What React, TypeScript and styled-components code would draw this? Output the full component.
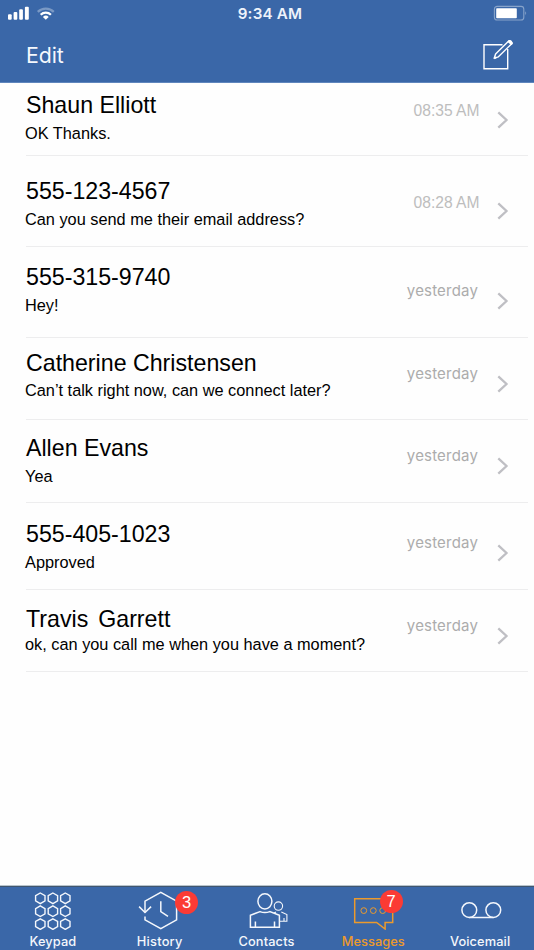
import React from "react";
import styled, { createGlobalStyle } from "styled-components";

const BLUE = "#3a67a8";
const ORANGE = "#ec9a2c";

const GlobalStyle = createGlobalStyle`
  * { box-sizing: border-box; }
  body { margin: 0; background: #fff; }
`;

const Screen = styled.div`
  display: flex;
  flex-direction: column;
  width: 534px;
  height: 950px;
  background: #fefefe;
  font-family: "Liberation Sans", Arial, sans-serif;
  overflow: hidden;
`;

const Header = styled.header`
  height: 83px;
  flex: none;
  background: ${BLUE};
  border-bottom: 1px solid #5f86bd;
  color: #fff;
  font-family: Inter, sans-serif;
`;

const StatusBar = styled.div`
  display: grid;
  grid-template-columns: 1fr auto 1fr;
  height: 28px;
  padding: 0 5px 0 11px;
`;

const StatusTime = styled.span`
  font-size: 15.2px;
  font-weight: 600;
  line-height: 28px;
  letter-spacing: 0.2px;
  color: #eef3fb;
`;

const StatusLeft = styled.div`
  margin-left: -5px;
`;

const StatusRight = styled.div`
  display: flex;
  justify-content: flex-end;
`;

const NavBar = styled.nav`
  display: flex;
  justify-content: space-between;
  height: 54px;
  padding: 0 18px 0 26px;
`;

const NavButton = styled.button`
  padding: 0;
  border: 0;
  background: none;
  color: #f5f8fd;
  font: 400 21.3px/54px Inter, sans-serif;
  letter-spacing: -0.1px;
  display: flex;
`;

const List = styled.main`
  flex: 1;
`;

const Row = styled.article<{ $height: number }>`
  display: flex;
  height: ${(p) => p.$height}px;
  margin: 0 6px 0 26px;
  border-bottom: 1px solid #ededee;
`;

const Summary = styled.div<{ $top: number }>`
  flex: 1;
  padding-top: ${(p) => p.$top}px;
`;

const Name = styled.h2<{ $wordGap?: number }>`
  margin: 0;
  color: #000;
  font-size: 23.2px;
  font-weight: 400;
  line-height: 28px;
  word-spacing: ${(p) => p.$wordGap ?? 0}px;
  white-space: nowrap;
`;

const Preview = styled.p<{ $gap: number }>`
  margin: ${(p) => p.$gap}px 0 0 -1px;
  color: #000;
  font-size: 16.32px;
  line-height: 20px;
  white-space: nowrap;
`;

const Time = styled.time<{ $top: number; $word: boolean }>`
  padding-top: ${(p) => p.$top}px;
  margin-right: ${(p) => (p.$word ? 19 : 17.5)}px;
  color: ${(p) => (p.$word ? "#acacac" : "#bdbdbd")};
  font-family: ${(p) => (p.$word ? "Inter" : '"Liberation Sans"')}, sans-serif;
  font-size: ${(p) => (p.$word ? 15 : 15.6)}px;
  line-height: 20px;
  letter-spacing: ${(p) => (p.$word ? 0.18 : 0)}px;
`;

const Disclosure = styled.div<{ $top: number }>`
  width: 31px;
  padding-top: ${(p) => p.$top}px;
  line-height: 0;
`;

const TabBar = styled.footer`
  display: grid;
  grid-template-columns: repeat(5, 1fr);
  height: 64px;
  flex: none;
  background: ${BLUE};
  border-top: 1px solid #40566f;
  box-shadow: 0 -1px 0 #b8c4cc;
`;

const Tab = styled.div<{ $active?: boolean }>`
  position: relative;
  display: flex;
  flex-direction: column;
  align-items: center;
  padding-top: 1px;
  color: ${(p) => (p.$active ? ORANGE : "#f4f7fc")};
`;

const TabLabel = styled.span<{ $spacing: number }>`
  font: 500 12.8px/16px Inter, sans-serif;
  letter-spacing: ${(p) => p.$spacing}px;
  margin: 4px 1px 0 0;
`;

const Badge = styled.span<{ $left: number; $top: number }>`
  position: absolute;
  left: ${(p) => p.$left}px;
  top: ${(p) => p.$top}px;
  width: 23px;
  height: 23px;
  border-radius: 50%;
  background: #fb3b34;
  color: #fff;
  font-size: 16.5px;
  line-height: 23px;
  text-align: center;
`;

const SignalIcon = () => (
  <svg width="52" height="28" viewBox="6 0 52 28">
    <g fill="#fff">
      <rect x="8" y="14.2" width="3.7" height="5.6" rx="1" />
      <rect x="13.6" y="12" width="3.7" height="7.8" rx="1" />
      <rect x="19.2" y="9.3" width="3.7" height="10.5" rx="1" />
      <rect x="24.9" y="6.8" width="3.9" height="13" rx="1" />
    </g>
    <g fill="none" stroke="#fff" strokeWidth="2.3">
      <path d="M37.8 11.9A11.4 11.4 0 0 1 53.8 11.9" opacity="0.33" />
      <path d="M40.7 14.7A7.3 7.3 0 0 1 50.9 14.7" />
    </g>
    <path d="M45.8 19.8L42.9 17A4.1 4.1 0 0 1 48.7 17Z" fill="#fff" />
  </svg>
);

const BatteryIcon = () => (
  <svg width="36" height="28" viewBox="493 0 36 28">
    <rect x="494.4" y="6.4" width="29.4" height="13.6" rx="2.8" fill="none" stroke="#87a3ca" strokeWidth="1.1" />
    <rect x="496.2" y="8.2" width="20.6" height="10" rx="0.8" fill="#fff" />
    <path d="M525.4 11.2Q527.2 13.2 525.4 15.3Z" fill="#9fb5d5" />
  </svg>
);

const ComposeIcon = () => (
  <svg width="34" height="54" viewBox="482 28 34 54" fill="none" stroke="#fff" strokeWidth="1.4">
    <path d="M502.5 44.7H484V68.7H507.7V49" />
    <path
      d="M494.2 58.2L495.6 54L508.2 41.6Q509.8 40.2 511.2 41.4Q512.6 42.8 511 44.4L498.4 56.8Z"
      fill={BLUE}
      strokeLinejoin="round"
    />
    <path d="M509.2 41.4L511.4 43.4" strokeWidth="2.8" strokeLinecap="round" />
    <path d="M494.2 58.2L496.2 57.4" strokeWidth="2" />
  </svg>
);

const ChevronIcon = () => (
  <svg width="13" height="18" viewBox="0 0 13 18" fill="none" stroke="#bfbfc4" strokeWidth="2.3">
    <path d="M1.3 1.3L9.5 9L1.3 16.7" />
  </svg>
);

const hexagon = (x: number, y: number) =>
  `M${x} ${y - 5.3}L${x + 4.7} ${y - 2.6}V${y + 2.6}L${x} ${y + 5.3}L${x - 4.7} ${y + 2.6}V${y - 2.6}Z`;

const KeypadIcon = () => (
  <g strokeWidth="1.4">
    {[898.3, 911.2, 924.1].map((y) =>
      [40.7, 53.3, 65.7].map((x) => <path key={`${x}-${y}`} d={hexagon(x, y)} />)
    )}
  </g>
);

const HistoryIcon = () => (
  <>
    <path d="M145.2 912.4V901.2L161 892.3L176.8 901.2V919.8L161 928.7L145.2 919.8V916.5" />
    <path d="M139.3 906.6L145.2 912.5L151.3 906.6" />
    <path d="M161 901.3V911.5L168.2 916.3" />
  </>
);

const ContactsIcon = () => (
  <>
    <ellipse cx="264.9" cy="901.3" rx="7" ry="7.6" />
    <path d="M260 911.6L250.4 915.3V927.3H279.4V915.3L269.8 911.6Q264.9 913.4 260 911.6Z" />
    <path d="M255.4 921.5V927M274.5 921.5V927" />
    <g strokeWidth="1.1">
      <circle cx="278.4" cy="906.1" r="4.2" />
      <path d="M276 912L274 913M281.3 912L286.9 914.6V921.3H280M284 918V921" />
    </g>
  </>
);

const MessagesIcon = () => (
  <>
    <path d="M354.5 898.8H392.5V922.4H384.9V929L376.4 922.4H354.5Z" />
    <g strokeWidth="1">
      <circle cx="363.6" cy="910.6" r="2.9" />
      <circle cx="373.1" cy="910.6" r="2.9" />
      <circle cx="382.5" cy="910.6" r="2.9" />
    </g>
  </>
);

const VoicemailIcon = () => (
  <>
    <circle cx="468.9" cy="910.1" r="7.4" />
    <circle cx="492.9" cy="910.1" r="7.4" />
    <path d="M468.9 917.5H492.9" />
  </>
);

const tabs = [
  { label: "Keypad", Icon: KeypadIcon, spacing: 0.1 },
  { label: "History", Icon: HistoryIcon, spacing: 0.25, badge: { count: 3, left: 68.3, top: 3.8 } },
  { label: "Contacts", Icon: ContactsIcon, spacing: 0.15 },
  { label: "Messages", Icon: MessagesIcon, spacing: 0.05, active: true, badge: { count: 7, left: 59.3, top: 2.8 } },
  { label: "Voicemail", Icon: VoicemailIcon, spacing: 0.1 },
];

const messages = [
  { name: "Shaun Elliott", text: "OK Thanks.", time: "08:35 AM", height: 73, top: 8, gap: 4, timeTop: 18, arrowTop: 28 },
  { name: "555-123-4567", text: "Can you send me their email address?", time: "08:28 AM", height: 91, top: 21, gap: 4, timeTop: 37, arrowTop: 46 },
  { name: "555-315-9740", text: "Hey!", time: "yesterday", height: 91, top: 16, gap: 4, timeTop: 34, arrowTop: 45 },
  { name: "Catherine Christensen", text: "Can’t talk right now, can we connect later?", time: "yesterday", height: 82, top: 11, gap: 3, timeTop: 26, arrowTop: 37 },
  { name: "Allen Evans", text: "Yea", time: "yesterday", height: 83, top: 14, gap: 4, timeTop: 26, arrowTop: 37 },
  { name: "555-405-1023", text: "Approved", time: "yesterday", height: 87, top: 17, gap: 4, timeTop: 30, arrowTop: 41 },
  { name: "Travis Garrett", text: "ok, can you call me when you have a moment?", time: "yesterday", height: 82, top: 15, gap: 1, timeTop: 26, arrowTop: 37, wordGap: 3.5 },
];

export default function App() {
  return (
    <Screen>
      <GlobalStyle />
      <Header>
        <StatusBar>
          <StatusLeft>
            <SignalIcon />
          </StatusLeft>
          <StatusTime>9:34 AM</StatusTime>
          <StatusRight>
            <BatteryIcon />
          </StatusRight>
        </StatusBar>
        <NavBar>
          <NavButton>Edit</NavButton>
          <NavButton aria-label="Compose">
            <ComposeIcon />
          </NavButton>
        </NavBar>
      </Header>
      <List>
        {messages.map((m) => (
          <Row key={m.name} $height={m.height}>
            <Summary $top={m.top}>
              <Name $wordGap={m.wordGap}>{m.name}</Name>
              <Preview $gap={m.gap}>{m.text}</Preview>
            </Summary>
            <Time $top={m.timeTop} $word={m.time === "yesterday"}>
              {m.time}
            </Time>
            <Disclosure $top={m.arrowTop}>
              <ChevronIcon />
            </Disclosure>
          </Row>
        ))}
      </List>
      <TabBar>
        {tabs.map(({ label, Icon, spacing, active, badge }, i) => (
          <Tab key={label} $active={active}>
            <svg
              width="60"
              height="42"
              viewBox={`${23.4 + i * 106.8} 888 60 42`}
              fill="none"
              stroke="currentColor"
              strokeWidth="1.5"
            >
              <Icon />
            </svg>
            <TabLabel $spacing={spacing}>{label}</TabLabel>
            {badge && (
              <Badge $left={badge.left} $top={badge.top}>
                {badge.count}
              </Badge>
            )}
          </Tab>
        ))}
      </TabBar>
    </Screen>
  );
}
